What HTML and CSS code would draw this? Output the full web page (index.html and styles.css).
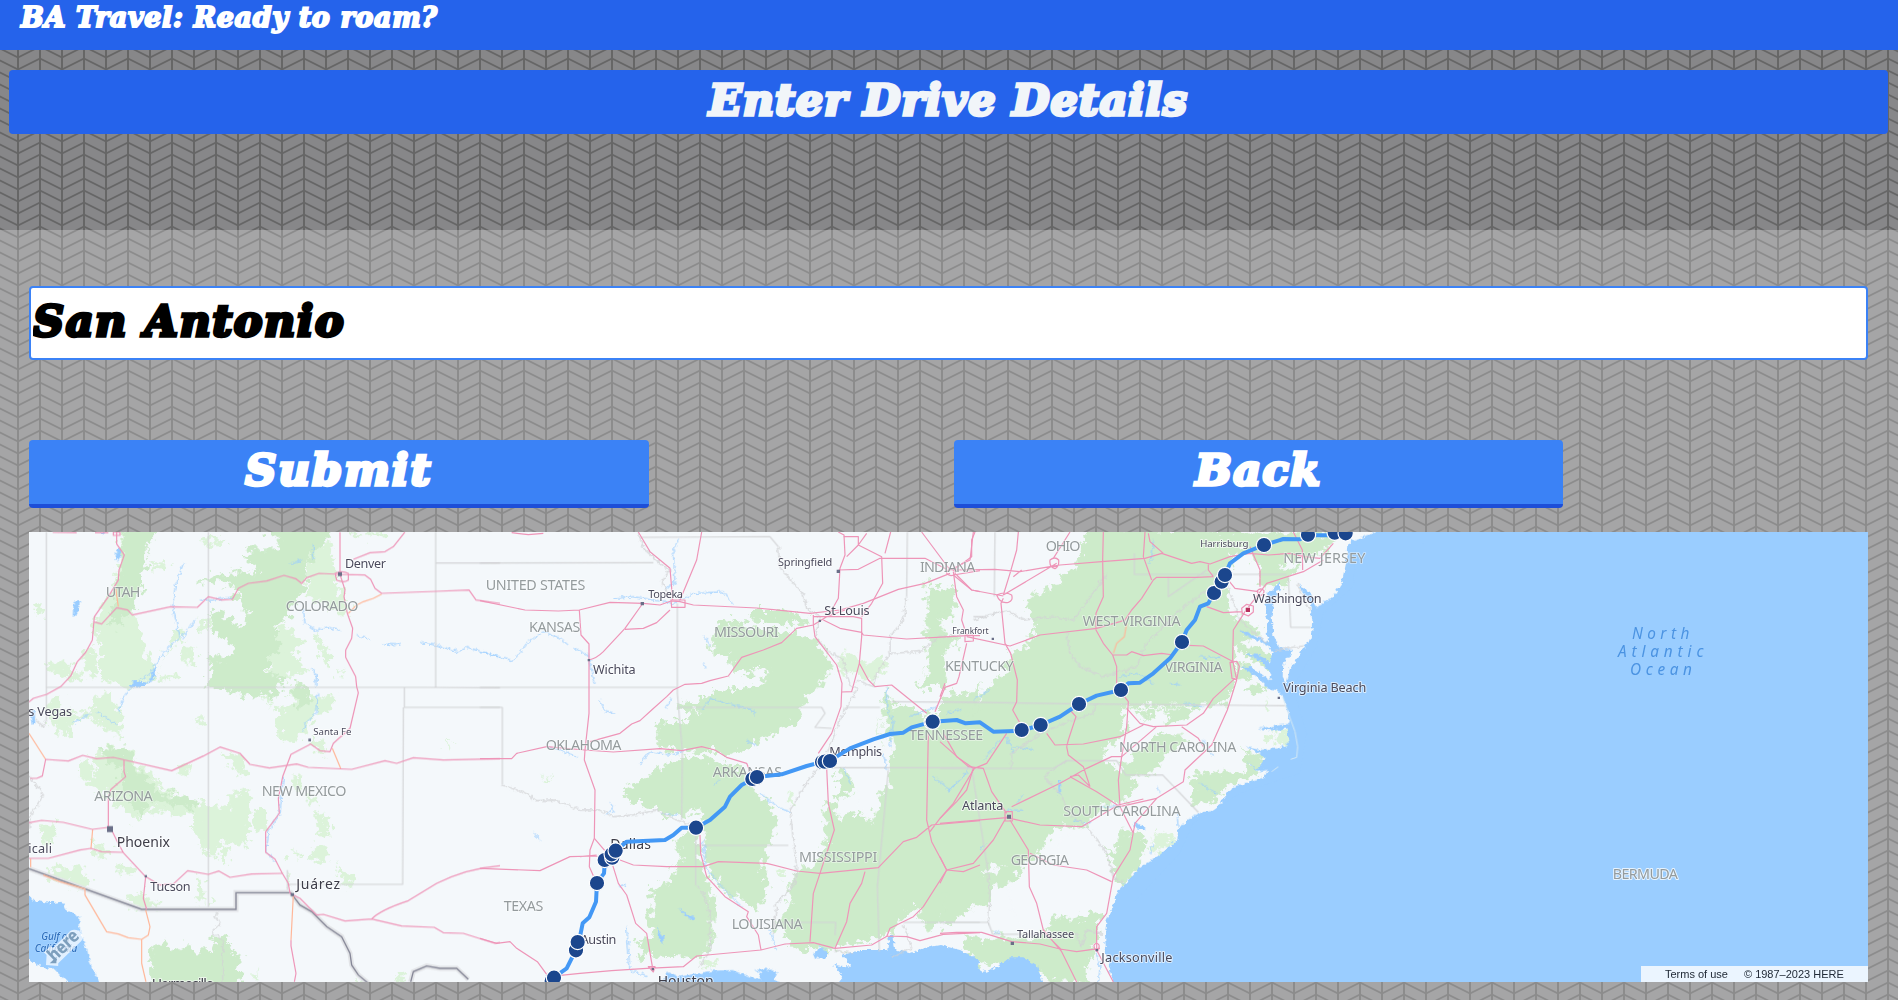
FILE: index.html
```html
<!DOCTYPE html>
<html lang="en">
<head>
<meta charset="utf-8">
<title>BA Travel</title>
<link rel="stylesheet" href="styles.css">
</head>
<body>
<header class="site-header"><h1 class="brand">BA Travel: Ready to roam?</h1></header>
<div class="banner"><h2 class="banner-title">Enter Drive Details</h2></div>
<main class="panel">
  <input class="city-input" type="text" value="San Antonio" aria-label="City">
  <div class="actions">
    <button class="btn btn-submit">Submit</button>
    <button class="btn btn-back">Back</button>
  </div>
  <section class="map">
    <svg class="map-canvas" viewBox="87 36 5517 1350" preserveAspectRatio="none">
      <defs>
        <filter id="rough" filterUnits="userSpaceOnUse" x="87" y="0" width="5517" height="1420">
          <feTurbulence type="fractalNoise" baseFrequency="0.045" numOctaves="4" seed="4"/>
          <feDisplacementMap in="SourceGraphic" scale="58" xChannelSelector="R" yChannelSelector="G"/>
        </filter>
        <filter id="wavy" filterUnits="userSpaceOnUse" x="87" y="0" width="5517" height="1420">
          <feTurbulence type="fractalNoise" baseFrequency="0.08" numOctaves="2" seed="8"/>
          <feDisplacementMap in="SourceGraphic" scale="18" xChannelSelector="R" yChannelSelector="G"/>
        </filter>
      </defs>
      <rect class="land" x="87" y="36" width="5517" height="1350"/>

      <!-- parks and forests -->
      <g filter="url(#rough)">
        <g class="park">
          <path d="M365 16L350 180 320 230 300 280 275 320 300 370 300 480 370 500 440 490 470 460 450 420 430 370 410 300 400 240 420 150 430 16zM470 450L500 400 545 350 550 325 520 325 515 370z"/>
          <path d="M450 130h60l-10 15h-55zM140 425l75 5 5 30 30 5-5 20-50-15-50-20zM245 400l40-15 10 50-10 40-30-20zM470 475l60-15 10 10-50 15zM105 250l25 0 0 35-20 0zM600 300l25 0-5 35-25 0zM545 380l45 10-10 40-35-5zM600 55l75 0 5 18-75-2zM1055 36h30v14h-30zM1105 36h50v14h-50z"/>
          <path d="M140 590L150 540 175 530 190 570 270 580 290 520 330 510 335 550 360 560 365 650 310 620 270 590 210 610 205 650 170 640z"/>
          <path d="M240 725h35l5 40 35 25-10 35-35-30-30-30zM330 680l70 10 10 50 50 30 40 45 90 30-5 30-70 10-60-15-50 30-60-50-50-60-15-80z"/>
          <path d="M585 850l100 10 0-35 50-15 15 30-10 60 15 30-20 50-50-10-10-20-30 60-30-5-30-80zM765 865l25 0 15 60-25 20-20-40zM665 690l60 15 20 55-15 10-50-45zM540 730l30 0-5 30-30 5zM670 980l15 0-5 60-15-10z"/>
          <path d="M125 920l40-5 2 50-40 10zM150 1045l95-5 35 60-30 10-90-30zM275 960l60 30-5 25-50-15zM350 1030l50 5-5 25-45-5zM380 1130l40-15 70 50-100-5zM590 1080l20 0 0 75-18-10zM625 1130l10 0 0 30-8 0z"/>
          <path d="M830 565l50-5-15-70 30 0 20 45 90-10-20 45-50 20-10 40-20 5-10 30-60-5zM930 650l50 20-5 35-25-10zM780 510l25-5 0 50-15-30zM580 600l30-5 5 20-25-2zM790 345l60-30 60 50-30 30 40 60-60 10-40 40z"/>
          <path d="M945 870l15 0 5 25 30 0-5 45-40 0zM935 980l50 0 0 40-50 0zM875 995l30 0-5 20-30 0zM1010 1030l60 45-35 35-15-45zM885 765l10 5-5 40-18-5zM920 830l35 0-5 20-30-5zM950 340l40 60 0 40-20-10-25-60zM1005 450l20 10-15 10zM1335 680l15-20 8 2-20 20zM1190 1360l25 5-15 20-15 0zM860 1050l15 10-5 40-10-10zM765 1340l8 46-12-10zM1070 1370l40 16-40 0z"/>
          <path d="M930 60l60 10 30 150 30 50-30 20-40-40-60-20z"/>
        </g>
        <g class="forest">
          <path d="M370 16h110l-25 38-15 20 0 60-10 20-10 60-20 60-30 20-20 30-25-10 15-60 20-100z"/>
          <path d="M780 16h190l20 30-50 50-20 40 0 40-20 60-30 20 0 40-40 15-5 40 20 40-40 20-5 40 50 30-15 50-60-10-50 15-50-30-50-10 10-50-15-40 80 10 5-30-70-50-10-50 20-20 90 60 10-50-30-20-10-50-60-20-60 5 50-25 80-10 60 5-10-30-45-20 20-25 90 0 10-15z"/>
          <path d="M370 740L400 740 450 790 480 820 540 830 590 840 585 865 530 855 490 850 440 830 430 900 400 860 360 790zM300 690l80-10 20 35-20 30-60-20z"/>
          <path d="M450 1406l5-75-10-55 50-5 15 20 50-15 10 15 60 0 20-40 30 5 20 40 25 20-10 90zM870 490l50 5 10 50-30 20-15-30z"/>
        </g>
        <g class="forest" transform="translate(1440 0)">
          <path d="M690 370L715 310 755 298 815 320 850 325 920 335 1000 350 1040 405 1058 450 1020 500 975 535 965 590 900 635 850 655 800 690 740 705 700 690 600 692 535 682 525 605 630 600 650 572 600 568 600 545 650 550 700 515 800 505 850 490 865 450 820 440 825 470 760 455 750 415 700 400z"/>
          <path d="M805 270l100 0 90 30-10 20-100-15-60 0z"/>
          <path d="M570 720L670 710 730 730 790 745 810 795 840 825 890 880 885 940 855 1000 850 1030 865 1110 830 1180 800 1150 740 1120 690 1060 680 990 670 900 640 860 625 890 560 885 510 865 450 845 430 815 500 770z"/>
          <path d="M620 930L660 940 655 1010 690 1090 700 1170 695 1290 660 1315 560 1310 470 1310 490 1290 465 1265 530 1240 500 1200 520 1150 500 1110 560 1090 600 1020 590 960z"/>
          <path d="M1215 500L1235 550 1300 570 1380 590 1500 580V1140L1400 1180 1340 1210 1305 1160 1280 1185 1225 1240 1150 1265 1060 1290 1000 1280 960 1300 930 1270 890 1215 930 1150 925 1100 950 1060 1010 1030 1040 960 1030 850 1070 850 1070 890 1130 880 1165 900 1190 860 1200 790 1210 700 1200 600z"/>
          <path d="M1075 750L1150 745 1140 800 1090 830 1075 860zM1320 1200l60-25 10 30-50 30z"/>
          <path d="M1335 180l15 20 75 5-5 80-35 20 15 60-10 130-30 10-60-5 40-25 5-90-10-60 10-70zM1460 530l40-40 0 60-40 10z"/>
        </g>
        <g class="forest" transform="translate(2820 0)">
          <path d="M430 16L420 110 350 195 255 235 285 310 270 370 205 400 195 450 150 500 120 540 60 560 0 560V640H90L60 700 0 740V1140L60 1125 150 1035 260 1040 360 920 430 920 500 850 540 860 590 800 560 740 480 710 560 640 540 560 860 556 885 470 875 380 960 340 870 270 850 200 880 100 940 90 1000 36z"/>
          <path d="M30 1040l110 20 80-30 30 20-40 40-60 10 0 60-60 0-30 40-60 20z"/>
          <path d="M540 930l60 10 20 30-20 60-50 70-30-20 0-50-40-60 50 20z"/>
          <path d="M760 760l40-10 50 10 60 0 60-50 0 20-30 40-80 25-40 60-70-10zM900 690l70 20-10 40-40-20zM560 660l30-20 120 0 30 20-50 40-60 60-70 10-30-40z"/>
          <path d="M590 570l130-10 40 10-40 40-60-10-50 10zM880 360l80 25 40 50-10 20-90-60zM900 510l50-20 40 20-60 15zM900 420l60 50-80 10zM940 36h200l50 10-20 40-70 30-60 0-20 30-60 30-20-60zM960 170l60-30 60 0-30 40-40 20-50-10z"/>
          <path d="M330 1180l40 15 60-10 50-30 0 50-10 60-30 80 0 60-70-30-20 20-60-50-60 0-60-20-50 10-40-30-10-50 80-5 70 5 60 5 40-20z"/>
          <path d="M0 210l40 0 5 55-45 10zM0 345h50l0 30-40 15zM0 540l40-20 70 0 0 60-110 10z"/>
        </g>
      </g>
      <!-- open valleys inside the forests -->
      <g class="land" filter="url(#rough)">
        <path transform="translate(1440 0)" d="M1100 740l80 0 30-60-10-100 20 20 20 80-10 60 0 60-30 20-20 90-30-30z"/>
        <path transform="translate(2820 0)" d="M370 945l70-20 60 60 20 60 0 60-30 80-30-10-60 20-80-10-40 40-50-10-10-60-20-50 50-60 90-60zM480 700l60-50 60-20 50-60 40 10-30 50-50 60-60 40-20 20zM855 150l50-40 60 30-10 80 10 100-50-30-30-60-20-40z"/>
      </g>
      <g class="park" filter="url(#rough)">
        <path transform="translate(1440 0)" d="M1080 400l60 10 0 20 75-15 10 25-30 20-10 30-50-30-40-5 0 30-15-20zM670 1325h40v14h-40zM925 820l15-5 0 40-15 0zM900 1055l20 0-5 20-18 0zM185 765l25 5-10 10z"/>
        <path transform="translate(2820 0)" d="M640 930l50 20 20 15-60 35-15-20zM1010 635l35-5 5 40-30 10zM970 650l30-5 0 25-25 0zM970 540l15-5 0 30-12 5z"/>
      </g>

      <!-- water -->
      <g class="water" filter="url(#wavy)">
        <path d="M70 1110L100 1140 150 1150 185 1145 200 1170 238 1190 240 1240 262 1290 270 1330 305 1400 200 1386 160 1345 120 1340 70 1310z"/>
        <path d="M225 245l15-2-2 15-12 30-8 2 2-35zM348 90l12-5 3 25-10 15-6-5zM300 36h14l-6 8zM385 498l20-15 40 5 20-50 3 25-18 25-40 15zM92 570l12 0 2 40-8 5z"/>
        <path transform="translate(1440 0)" d="M530 1420L560 1355 600 1370 640 1362 700 1352 760 1350 810 1370 835 1378 850 1345 890 1355 880 1380 940 1400zM1000 1300l20-20 20 10 0 25-30 0zM530 1220l20 30 0 20-10-5zM600 1165l25 20 20 5-5 10-25-10zM825 1350l50-5-30 15z"/>
        <path transform="translate(1440 0)" d="M1050 1420L1090 1370 1060 1335 1115 1340 1085 1305 1140 1290 1222 1290 1228 1245 1240 1245 1245 1288 1290 1300 1330 1285 1380 1275 1440 1290 1500 1320 1490 1345 1520 1355 1560 1335 1590 1312 1630 1312 1670 1335 1700 1420z"/>
        <path transform="translate(2820 0)" d="M1340 20L1300 40 1240 60 1222 75 1218 130 1205 190 1180 228 1130 262 1118 230 1075 190 1080 200 1110 250 1117 300 1112 360 1090 385 1070 420 1050 445 1040 490 1028 470 1030 430 1060 390 1020 385 1000 345 995 290 1003 235 1020 205 1020 185 1000 205 978 230 975 270 985 310 980 340 988 368 930 340 900 330 910 342 960 365 985 380 998 395 990 430 960 405 920 400 970 430 995 465 990 480 930 440 900 440 950 470 985 505 1010 510 1028 530 1048 590 1045 612 990 620 955 625 1000 632 1040 625 1050 670 1010 685 960 690 915 680 960 700 975 715 950 750 920 720 950 755 985 750 970 775 930 785 880 800 850 840 825 872 780 878 740 900 715 930 712 960 690 980 640 1018 590 1050 565 1080 545 1100 525 1130 520 1160 500 1200 495 1240 498 1300 510 1350 530 1420 2900 1420 2900 20z"/>
        <path transform="translate(2820 0)" d="M580 905l35 15 0 12-30-8zM355 780l8 0 0 50-8-10z"/>
      </g>
      <rect class="water" x="4150" y="36" width="1454" height="1350"/>
      <path class="water" transform="translate(2820 0)" d="M1250 70h200V1386H580V1150L720 1000 760 910 900 820 1080 760 1100 640 1060 500 1130 380 1150 280 1240 200z"/>
      <path class="barrier" transform="translate(2820 0)" d="M1028 530L1045 580 1065 635 1073 680 1070 712 1052 718M1015 740l-20 15"/>

      <!-- rivers -->
      <g class="river" filter="url(#wavy)">
        <path d="M550 130L525 200 518 260 540 350 490 400 450 460 400 495 370 530 355 580M585 300L545 355M270 580L220 610M940 70v50M910 270L915 310 950 333 980 320 1020 332M1070 347l40 12M1150 372l35 2 20-4M1260 367l45 8 70 20 28-13 100 30M937 445l12 20-2 35M953 520l-3 60-35 30-5 25M850 770l-10 110-35 55-5 60 25 30M600 240l40 0 60-10M290 575l60 40M870 130l40-10"/>
        <path transform="translate(1440 0)" d="M0 395L100 423 140 370 190 335 240 355 265 375M280 385l45 20 20 85M595 55L580 95 585 190 555 205M400 235l60-5 120 20 60-30 90-5 30 40M360 540l10 30 35 10M555 565l20-30M660 570l20-15 10-20 50 15 80 20 5 20M440 1220l10 130 50 20M840 820l60 45 30 10M480 735l30-40 60 10 50-15M200 680l40 10 50 20M160 940l25 20M1220 500l0 60 20 50-10 70M1290 590l80-30M1210 700l10 50M1400 820l60-60M1360 770l50 40M670 960l5 80 50 60 60 60M800 660l30 20M540 880l50 5M390 850l10 20-25 15M420 1100l20-5M720 780l-20 15M670 345l20 30M670 430l5 15M1090 740l20 50M870 1230l20 60"/>
        <path transform="translate(2820 0)" d="M640 60l-5 60M540 470l50-10 50 30M690 490l30 5M200 650l20 50M130 720l50-60M220 680l60 10M20 815l40-35 30-40M230 850l20-25M200 870l50 0M630 1000l10-30M650 800l15 20M400 900l50 10M480 860l60 0M780 410l60 5M730 550l60 10M140 970l-20 20M780 790l50 30M790 660l30 50M20 580l40-10M640 110l-15 20M100 540l50-30M470 1300l10 40-5 50M160 1240l20-5M710 880l5 40"/>
      </g>

      <!-- state and country borders -->
      <g class="state">
        <path d="M139 36V600M139 502H1280L1500 503M625 36V1168M1307 36V502M1307 129H1500M1213 502L1213 562H1500M1210 562L1208 1093H862M862 1050v60"/>
        <path transform="translate(1440 0)" d="M0 129L520 128M0 502H592M592 250V520L607 692 605 900M0 562H67V795M480 52L870 50 895 80M592 562H1025L1035 580 1005 622 1055 625M1100 562H1200M1235 545L1500 547M1050 743H1480M1225 750L1192 1100 1198 1295M648 976H925M647 940V1095M905 1207H1067L1065 1245M1270 1207H1500M1282 36L1280 230M1480 290h30"/>
        <path transform="translate(2820 0)" d="M165 36L163 230M583 100V163H1040M0 545L430 552 470 552 1035 557M0 745H340L380 722H530L557 765H668L775 877M95 745L140 1030M0 1207H145L158 1243 410 1242M1045 170L1052 322H1112M685 170V230L800 150"/>
      </g>
      <g class="state" filter="url(#wavy)">
        <path d="M87 765L130 825 95 880 87 930M110 600l20 20 10-20M655 1170L645 1190 660 1210 635 1235 668 1260 668 1386"/>
        <path transform="translate(1440 0)" d="M67 795L140 820 170 842 220 840 300 870 360 870 400 890 460 885 530 870 590 900 650 920M475 36L490 85 540 130 570 150 545 185 575 240M895 80L900 140 970 225 980 265 1020 290 1005 350 1040 390 1090 420 1110 495 1130 510 1100 560 1075 610 1050 680 1020 740 985 780 930 870 940 960 950 1040 945 1090 890 1150 880 1240M1280 230L1270 300 1230 350 1230 400 1190 460 1180 500 1130 480M1230 400L1320 395 1380 350 1480 340M650 1095L670 1120 690 1180 690 1290 660 1340M1270 1215l25 70-60 25M1060 1290l60 10"/>
        <path transform="translate(2820 0)" d="M100 300L200 270 250 300 340 290 400 300 460 220 500 160M380 340L390 400 420 440 490 470 590 440 620 370 720 270 800 210M215 745V700L300 640 400 600 460 580 470 552M380 722L310 770 360 820 390 880 440 920 500 1000 520 1070 550 1090M140 1030L150 1120 145 1207M410 1242L425 1280 440 1230 490 1240M860 190L900 300 980 370M1070 190L1110 270M1000 392l90-15"/>
      </g>
      <path class="border-halo" d="M87 1046L425 1168H708V1118H872L900 1155 935 1175 980 1220 1025 1250 1050 1300 1055 1335 1075 1365 1105 1390M1232 1386L1240 1355 1280 1338 1320 1345 1370 1345 1405 1378"/>
      <path class="border-line" d="M87 1046L425 1168H708V1118H872L900 1155 935 1175 980 1220 1025 1250 1050 1300 1055 1335 1075 1365 1105 1390M1232 1386L1240 1355 1280 1338 1320 1345 1370 1345 1405 1378"/>

      <!-- highways -->
      <g class="road-alt">
        <path d="M347 205L355 260M1145 222L1120 235 1090 245 1070 255 1045 280M87 640L137 718M997 685L1022 745M278 928L273 985M92 1016v25M130 1065L180 1085 255 1107 255 1125 320 1235 355 1242 385 1253 425 1258 445 1245 450 1220 437 1170M425 1258V1330L438 1386M880 1125L873 1260"/>
        <path transform="translate(2820 0)" d="M560 310L553 350 530 370 520 400"/>
      </g>
      <g class="road">
        <path d="M158 37L230 38M285 38h40M350 36v36L373 105 357 150 355 180 325 230 283 290 277 360 257 397 232 425 212 468 182 500 140 523 100 535 87 546M280 305L305 312 350 263 383 270 397 285 512 260 592 262 625 230 665 240 697 238 715 205 745 190 800 183 852 166 887 176 905 190 920 173 957 160 1020 163 1095 165 1112 178 1125 205 1145 220 1307 214 1407 210 1428 240 1500 250M1020 36V163L1035 210 1032 230 1042 280 1058 325 1055 355 1037 390 1037 412 1067 470 1070 500 1075 518 1050 625 1000 670 990 695 960 692 932 672 873 703 848 770 835 835 838 880 797 935 797 997 825 1017 847 1060 865 1090 870 1120M1215 36L1180 80 1155 95 1110 98 1060 118M1005 160q20-10 40 0l0 20q-15 10-35 0zM340 36h20v10h-20z"/>
        <path d="M90 775H110L127 768 137 718 205 723 248 706 290 716 340 712 515 752 610 708 660 681 720 700 750 733 808 744 890 732 925 742 1055 748 1155 722 1190 730 1240 713 1330 720 1500 716M372 718L372 755 377 770 333 808 325 830 325 920M87 908L125 901 190 907 277 928 325 922M87 1015H145L240 990 273 985 305 995 370 997M335 930L352 965 370 998 437 1070 430 1135 440 1168M437 1070L480 1095 520 1092 563 1052 625 1063 657 1053 690 1072 755 1062 847 1060M870 1120L900 1135 950 1185 970 1183 1035 1203 1115 1197 1205 1218 1303 1222 1330 1238 1390 1240 1485 1270 1500 1267M1115 1197Q1140 1170 1225 1142L1310 1090Q1400 1045 1500 1037M873 1260L873 1278 888 1360 883 1386"/>
        <path transform="translate(1440 0)" d="M95 38L145 44 190 40M0 242L135 270 235 273 298 270 390 247 490 250 540 255 573 243 600 245 640 255 830 264 990 280 1080 270 1150 250 1255 208 1335 190 1410 160M298 270L303 345 327 372V580L315 690 313 720 345 810 343 955 330 990 328 1040 350 1090M327 420Q350 415 370 395L435 325 487 252M435 328L490 325 530 308 570 270M475 36L510 95 570 145 578 240M665 36L650 120 600 240M573 240l42 0 0 22-40 0z"/>
        <path transform="translate(1440 0)" d="M330 665L420 640 455 612 480 602 515 570 560 530 580 510 615 493 665 490 690 482 745 468 785 412 850 390 905 368 950 325 1000 315 1040 290 1095 270M0 716H95L110 700 200 680 313 690 400 696 540 686 605 692 665 680 705 690 740 712 800 730 810 755M1000 285V315L1005 350 1070 435 1086 490 1083 560 1055 640 1015 700M1030 300L1080 325 1145 337 1150 345 1280 357 1410 350 1460 347 1500 347M1000 290H1120L1145 295V350L1138 430 1115 515 1085 516M1138 430L1165 480 1185 500 1235 495 1340 580M1365 575L1395 502 1430 490 1437 470 1460 370M1075 36L1092 45 1095 105 1080 145 1075 235 1050 280M1090 50h45l0 25-35 35M1135 75L1205 110 1208 190 1175 250 1145 290M1075 150L1135 148 1200 115 1335 115 1400 148M1215 100L1232 36M1160 40L1135 75M1325 36L1410 150 1470 120 1480 36M1420 155L1430 230 1450 270 1445 300 1460 345M1420 165L1500 152M1430 165L1475 210 1500 215M1455 345h25l0 18-25 2zM1400 153q13-10 25 0q5 13-12 14-15-2-13-14z"/>
        <path transform="translate(1440 0)" d="M0 1045L180 1052 270 1010 345 1008 420 1020 460 1035 560 1040 670 1040 715 1025 860 1030 950 1053 1020 1060 1195 1043 1270 965 1310 952 1355 915 1500 902M343 955L390 1010 415 1090 440 1125 467 1210 500 1240 518 1345M660 945L662 1000 680 1070 735 1130 805 1175 800 1190 835 1245 843 1290M1040 745L1045 850 1063 930 1000 1120 990 1265M1155 1055L1145 1090 1110 1150 1100 1205 1065 1285M1345 640L1340 900 1355 965 1400 1050 1330 1160 1300 1190 1230 1225 1220 1250M1390 640L1430 710 1480 745 1460 810 1430 845 1380 895 1350 935M1400 1050L1450 1055 1500 1035M0 1255L50 1270 90 1265 110 1285 172 1325 205 1370 300 1360 395 1352 500 1345 610 1340 650 1308 843 1290 915 1272 1000 1268 1065 1285 1175 1275 1222 1248 1280 1250 1320 1262 1390 1243 1500 1238M300 1010l50-5M505 1340h20l-5 16z"/>
      </g>
      <g class="road">
        <path transform="translate(2820 0)" d="M40 150L165 148 240 155 330 140 360 135 485 125 615 115 665 100 710 115 755 130 780 125 810 132 870 110 930 100M40 165L95 210 190 228M105 36L95 60 95 110 40 150M235 36L230 90 210 160 190 225M245 150L220 170M350 130L190 225M390 36L340 115M190 235L183 250 195 370 212 400 232 480 230 545 218 570 240 610M170 225q25-12 45 0 5 18-10 22-25 5-35-22zM330 120q15-12 26 0 2 20-11 26-18-5-15-26zM80 350L210 378 300 345 470 325 540 305 555 300 575 270 605 235 640 180 650 172 770 172 820 170M490 36L488 120 490 230 468 280 468 330 490 370 518 405 530 440 530 500 565 545 560 620 545 710 535 780 540 860 580 940M615 36L610 110 635 180M625 40L630 65 670 100M518 405L560 405 575 395 610 407 665 400 700 405M745 376L790 378 880 425M1060 36L1087 90 1088 150M930 100L985 105 1050 100 1090 110 1140 115 1180 70M1150 120L1090 155 980 190 915 275 880 330 878 420 890 480 862 570 815 675 735 750 730 785 650 835 585 910 570 990 520 1070 500 1180 470 1220 470 1290 520 1386M930 80L960 150 960 200M840 150L885 205 955 215M800 260L850 278 905 275M905 265l15-12 20 5 0 18-15 12-18-8zM952 212q10-10 20 0 0 12-10 14-10-2-10-14zM870 427l20-3 8 15-8 40-14-4z M805 130L805 150 820 170"/>
        <path transform="translate(2820 0)" d="M885 475L820 535 790 580 740 615 640 620 600 610 560 565M725 620L775 655 790 680M650 620L545 710 515 710 440 745 360 790 215 860M320 640L345 675 430 672 540 650 610 615M380 680L385 660 408 590 390 570M380 680L385 705 430 740 450 800M390 770L470 815 540 860 650 835M390 770L415 765 450 800M200 640L140 730 103 745 40 850 0 895M0 665L85 740 130 745 155 815 200 880M0 910L200 893 300 915 425 920 535 855 610 837M210 900L265 990 268 1100 290 1150 310 1230 365 1295 410 1386M200 890L160 960 100 1030 20 1050 0 1090M0 1010L20 1050M270 1000L300 1015 340 1035 440 1050 515 1085M0 1240L50 1237 125 1237 215 1265 300 1272 360 1287 410 1295 480 1285M195 875h22v28h-22zM462 1275q8-10 15 0 2 10-5 20-10-5-10-20zM365 1290L340 1265M0 530L15 490"/>
      </g>

      <g class="place">
        <path class="dot" d="M1014 156h12v12h-12zM925 656h8v8h-8zM321 918h18v18h-18zM434 1065h7v7h-7zM872 1119h10v9h-10z"/>
        <path class="dot" transform="translate(1440 0)" d="M482 246h10v10h-10zM323 417h7v7h-7zM1070 149h10v10h-10zM1016 299h7v7h-7zM515 1344h7v7h-7z"/>
        <path class="dot" transform="translate(2820 0)" d="M155 353h7v7h-7zM201 884h12v12h-12zM212 1265h10v10h-10zM467 1287h7v7h-7zM1013 530h7v7h-7z"/>
        <path class="capital" d="M3737 263h13v13h-13z"/>
      </g>

      <g class="state-name">
        <text x="317" y="231" textLength="104">UTAH</text>
        <text x="857" y="273" textLength="218">COLORADO</text>
        <text x="283" y="843" textLength="175">ARIZONA</text>
        <text x="785" y="828" textLength="254">NEW MEXICO</text>
        <text x="1457" y="210" textLength="299">UNITED STATES</text>
        <text x="1587" y="336" textLength="154">KANSAS</text>
        <text x="2142" y="351" textLength="194">MISSOURI</text>
        <text x="1637" y="690" textLength="227">OKLAHOMA</text>
        <text x="2138" y="771" textLength="208">ARKANSAS</text>
        <text x="2397" y="1026" textLength="235">MISSISSIPPI</text>
        <text x="1511" y="1173" textLength="119">TEXAS</text>
        <text x="2195" y="1227" textLength="213">LOUISIANA</text>
        <text x="2760" y="156" textLength="166">INDIANA</text>
        <text x="3137" y="93" textLength="104">OHIO</text>
        <text x="3850" y="129" textLength="246">NEW JERSEY</text>
        <text x="3248" y="318" textLength="294">WEST VIRGINIA</text>
        <text x="2835" y="453" textLength="206">KENTUCKY</text>
        <text x="3494" y="456" textLength="174">VIRGINIA</text>
        <text x="2727" y="660" textLength="223">TENNESSEE</text>
        <text x="3357" y="696" textLength="352">NORTH CAROLINA</text>
        <text x="3190" y="888" textLength="352">SOUTH CAROLINA</text>
        <text x="3032" y="1035" textLength="175">GEORGIA</text>
        <text class="island" x="4838" y="1077" textLength="196">BERMUDA</text>
      </g>
      <g class="city">
        <text x="1035" y="144" textLength="123">Denver</text>
        <text x="85" y="588" textLength="131">s Vegas</text>
        <text x="85" y="998" textLength="71">icali</text>
        <text x="451" y="1113" textLength="121">Tucson</text>
        <text x="1779" y="461" textLength="128">Wichita</text>
        <text x="2473" y="285" textLength="136">St Louis</text>
        <text x="2488" y="707" textLength="158">Memphis</text>
        <text x="1742" y="1272" textLength="107">Austin</text>
        <text x="2886" y="870" textLength="124">Atlanta</text>
        <text x="3759" y="249" textLength="206">Washington</text>
        <text x="3850" y="516" textLength="249">Virginia Beach</text>
        <text x="3304" y="1326" textLength="213">Jacksonville</text>
      </g>
      <g class="city city-big">
        <text x="350" y="981" textLength="160">Phoenix</text>
        <text x="889" y="1107" textLength="131">Juárez</text>
        <text x="1831" y="987" textLength="122">Dallas</text>
        <text x="455" y="1407" textLength="188">Hermosillo</text>
        <text x="1973" y="1399" textLength="168">Houston</text>
      </g>
      <g class="city city-small">
        <text x="1945" y="234" textLength="104">Topeka</text>
        <text x="2334" y="138" textLength="163">Springfield</text>
        <text x="3051" y="1254" textLength="172">Tallahassee</text>
      </g>
      <g class="city city-tiny">
        <text x="940" y="645" textLength="114">Santa Fe</text>
        <text x="3601" y="81" textLength="144">Harrisburg</text>
        <text x="2857" y="342" textLength="109" class="city-mini">Frankfort</text>
      </g>
      <g class="gulf">
        <text x="124" y="1260" textLength="88">Gulf of</text>
        <text x="104" y="1295" textLength="128">California</text>
      </g>
      <g class="ocean">
        <text x="4896" y="357" textLength="172">North</text>
        <text x="4854" y="411" textLength="256">Atlantic</text>
        <text x="4890" y="465" textLength="186">Ocean</text>
      </g>

      <path class="route" d="M1655 1386L1662 1372 1700 1345 1735 1275 1748 1210 1768 1192 1788 1145 1791 1088 1812 1060 1815 1020 1835 1008 1847 992 1880 965 1995 960 2020 945 2045 923 2088 923 2130 900 2175 860 2190 830 2225 795 2270 771 2345 763 2420 738 2470 725 2490 722 2550 685 2620 658 2670 642 2710 638 2735 622 2798 605 2870 600 2897 610 2940 607 2980 635 3065 632 3122 615 3180 590 3237 552 3290 527 3363 510 3385 490 3420 488 3460 460 3510 415 3546 366 3560 330 3585 300 3600 260 3625 250 3642 218 3665 185 3675 165 3690 130 3730 100 3792 75 3850 57 3900 58 3924 46 4005 46 4037 40"/>
      <g class="stop">
        <circle cx="1655" cy="1383" r="23"/><circle cx="1662" cy="1373" r="23"/><circle cx="1728" cy="1291" r="23"/><circle cx="1733" cy="1266" r="23"/>
        <circle cx="1791" cy="1089" r="23"/><circle cx="1814" cy="1020" r="23"/><circle cx="1837" cy="1013" r="23"/><circle cx="1835" cy="1003" r="23"/><circle cx="1847" cy="992" r="23"/>
        <circle cx="2088" cy="923" r="23"/><circle cx="2257" cy="777" r="23"/><circle cx="2271" cy="771" r="23"/>
        <circle cx="2466" cy="726" r="23"/><circle cx="2474" cy="725" r="23"/><circle cx="2490" cy="723" r="23"/><circle cx="2795" cy="606" r="23"/><circle cx="2798" cy="605" r="23"/>
        <circle cx="3065" cy="630" r="23"/><circle cx="3122" cy="615" r="23"/><circle cx="3237" cy="552" r="23"/><circle cx="3363" cy="510" r="23"/><circle cx="3546" cy="366" r="23"/>
        <circle cx="3642" cy="219" r="23"/><circle cx="3665" cy="185" r="23"/><circle cx="3675" cy="165" r="23"/><circle cx="3792" cy="75" r="23"/><circle cx="3924" cy="44" r="23"/><circle cx="4004" cy="38" r="23"/><circle cx="4037" cy="40" r="23"/>
      </g>

      <!-- HERE watermark -->
      <g class="watermark" transform="translate(172 1327) rotate(-44)">
        <path class="watermark-plate" d="M-30-18L-8-38V-50H20V-40H84Q104-44 112-22 114 2 96 4H0L-6 10z"/>
        <path class="watermark-mark" d="M-18-14H10L-4 0z"/>
        <text x="-6" y="-6" textLength="108" lengthAdjust="spacingAndGlyphs">here</text>
      </g>
    </svg>
    <div class="attribution"><span>Terms of use</span><span>© 1987–2023 HERE</span></div>
  </section>
</main>
</body>
</html>
```
FILE: styles.css
```css
* { box-sizing: border-box; }
body {
  margin: 0;
  height: 1000px;
  overflow: hidden;
  display: flex;
  flex-direction: column;
  font-family: "DejaVu Serif", serif;
  font-style: italic;
  font-weight: 700;
  background-color: #666;
  background-image: url("data:image/svg+xml,%3Csvg xmlns='http://www.w3.org/2000/svg' width='44' height='12' viewBox='0 0 44 12'%3E%3Cpath d='M20 12v-2L0 0v10l4 2h16zm18 0l4-2V0L22 10v2h16zM20 0v8L4 0h16zm18 0L22 8V0h16z' fill='%23878789'/%3E%3C/svg%3E");
  background-position: -3px 0;
}
h1, h2 { margin: 0; font-weight: inherit; }
.site-header {
  flex: none;
  height: 50px;
  padding-left: 21px;
  background: #2563eb;
}
.brand {
  color: #fff;
  font-size: 27px;
  line-height: 35px;
  letter-spacing: 0.65px;
  white-space: nowrap;
  -webkit-text-stroke: 2px #fff;
}
.banner {
  flex: none;
  height: 64px;
  margin: 20px 10px 0 9px;
  border-radius: 4px;
  background: #2563eb;
  text-align: center;
}
.banner-title {
  color: #f1f5f9;
  font-size: 43px;
  line-height: 61px;
  letter-spacing: 0.9px;
  -webkit-text-stroke: 3.4px #f1f5f9;
}
.panel {
  flex: 1;
  margin-top: 96px;
  padding: 56px 30px 18px 29px;
  display: flex;
  flex-direction: column;
  background: rgba(255, 255, 255, 0.25);
}
.city-input {
  flex: none;
  height: 74px;
  width: 100%;
  padding: 0 0 4px 2px;
  border: 2px solid #3b82f6;
  border-radius: 4px;
  background: #fff;
  color: #000;
  font: inherit;
  font-size: 43px;
  letter-spacing: 1.6px;
  -webkit-text-stroke: 3.4px #000;
  outline: none;
}
.actions { display: flex; gap: 305px; margin: 80px 0 24px; }
.btn {
  height: 68px;
  padding: 0 0 4px;
  border: 0;
  border-bottom: 4px solid #1d4ed8;
  border-radius: 4px;
  background: #3b82f6;
  color: #fff;
  font: inherit;
  font-size: 43px;
  letter-spacing: 2.2px;
  -webkit-text-stroke: 3.4px #fff;
}
.btn-submit { width: 620px; }
.btn-back { width: 609px; letter-spacing: 1.4px; }
.map { position: relative; height: 450px; overflow: hidden; background: #9acdff; }
.map-canvas { display: block; width: 100%; height: 100%; font-family: "Noto Sans", sans-serif; font-style: normal; font-weight: 400; }
.land { fill: #f4f8fb; }
.park { fill: #dcf3da; }
.forest { fill: #cdebca; }
.water { fill: #9acdff; }
.river, .road, .road-alt, .state { fill: none; stroke-linejoin: round; }
.river { stroke: #9acdff; stroke-width: 3; }
.barrier { fill: none; stroke: #d5e9f4; stroke-width: 3; }
.state { stroke: #d2d3d5; stroke-width: 3.4; }
.border-halo { fill: none; stroke: #e2e4e7; stroke-width: 15; }
.border-line { fill: none; stroke: #858797; stroke-width: 4; }
.road { stroke: #ee95b8; stroke-width: 3.6; }
.road-alt { stroke: #ffb799; stroke-width: 3.6; }
.dot { fill: #6a6f88; }
.capital { fill: #b8305f; stroke: #fff; stroke-width: 4; paint-order: stroke; }
.state-name, .city, .gulf { paint-order: stroke; stroke-linejoin: round; }
.state-name { font-size: 43px; fill: #949b9d; stroke: rgba(255, 255, 255, 0.5); stroke-width: 5px; }
.island { stroke: rgba(255, 255, 255, 0.75); stroke-width: 6px; }
.city { font-size: 38px; fill: #4a4a5c; stroke: rgba(255, 255, 255, 0.65); stroke-width: 6px; }
.city-big { font-size: 42px; fill: #3d3d48; }
.city-small { font-size: 33px; }
.city-tiny { font-size: 29px; }
.city-mini { font-size: 26px; }
.gulf { font-size: 30px; font-style: italic; font-weight: 500; fill: #2f6fbd; stroke: rgba(200, 228, 255, 0.6); stroke-width: 3px; }
.ocean { font-size: 46px; font-style: italic; fill: #4b93e2; }
.route { fill: none; stroke: #4398f5; stroke-width: 12; stroke-linejoin: round; }
.stop { fill: #1b468d; stroke: #fff; stroke-width: 3.5; }
.watermark { font-size: 54px; font-weight: 800; }
.watermark-plate { fill: rgba(255, 255, 255, 0.7); }
.watermark-mark, .watermark text { fill: #7d9fbd; }
.attribution {
  position: absolute;
  right: 0;
  bottom: 0;
  width: 227px;
  height: 16px;
  padding-left: 24px;
  display: flex;
  gap: 16px;
  background: rgba(255, 255, 255, 0.8);
  color: #222b38;
  font: 11px/16px "Liberation Sans", Arial, sans-serif;
  white-space: nowrap;
}
```
